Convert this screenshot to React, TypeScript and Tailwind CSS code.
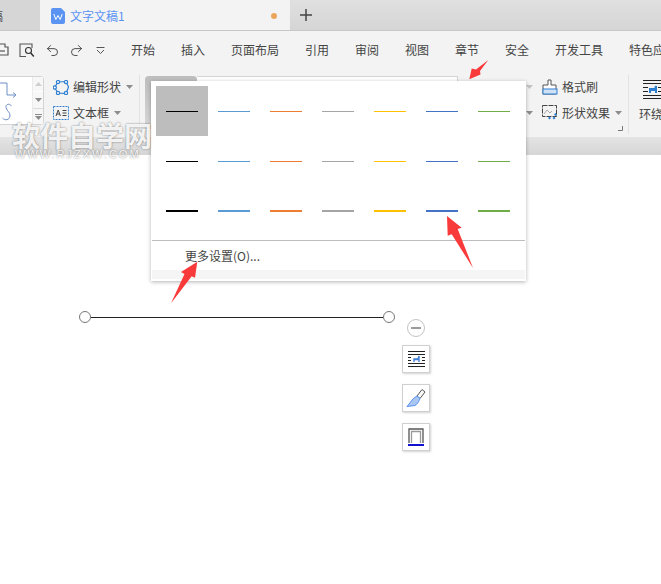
import { Redo2, Undo2 } from 'lucide-react';

const FONT = "font-['Noto_Sans_CJK_SC','Liberation_Sans',sans-serif]";

const tabs = [
  { label: '开始', width: 'w-[50px]' },
  { label: '插入', width: 'w-[50px]' },
  { label: '页面布局', width: 'w-[74px]' },
  { label: '引用', width: 'w-[50px]' },
  { label: '审阅', width: 'w-[50px]' },
  { label: '视图', width: 'w-[50px]' },
  { label: '章节', width: 'w-[50px]' },
  { label: '安全', width: 'w-[50px]' },
  { label: '开发工具', width: 'w-[74px]' },
  { label: '特色应用', width: 'w-[74px]' },
];

const lineColors = [
  'bg-[#000000]',
  'bg-[#5b9bd5]',
  'bg-[#ed7d31]',
  'bg-[#a5a5a5]',
  'bg-[#ffc000]',
  'bg-[#4472c4]',
  'bg-[#70ad47]',
];

const rows = ['h-px', 'h-px', 'h-[2px]'];

function Caret({ className = '', light }: { className?: string; light?: boolean }) {
  return (
    <svg width="7" height="4" viewBox="0 0 7 4" className={className}>
      <path d="M0 0h7L3.5 4z" fill={light ? '#c4c4c4' : '#8c8c8c'} />
    </svg>
  );
}

function QuickIcons() {
  return (
    <div className="flex items-center w-[131px] shrink-0 text-[#555]">
      <svg width="9" height="14" viewBox="0 0 9 14" className="mr-[10px]" fill="none" stroke="#555" strokeWidth="1.2">
        <path d="M-4 1h9v3h3v8H-1" />
        <path d="M-2 8h7" />
      </svg>
      <svg width="16" height="15" viewBox="0 0 16 15" className="mr-[10px]" fill="none" stroke="#555" strokeWidth="1.1">
        <path d="M13 5V1H1v12.5h6" />
        <circle cx="9.5" cy="7.5" r="3" stroke="#333" />
        <path d="M11.8 10l3 3.5" stroke="#333" strokeWidth="1.5" />
      </svg>
      <Undo2 size={15} strokeWidth={1.5} color="#444" className="mr-[9px]" />
      <Redo2 size={15} strokeWidth={1.5} color="#444" className="mr-[12px]" />
      <svg width="9" height="7" viewBox="0 0 9 7" fill="none" stroke="#555" strokeWidth="1">
        <path d="M.5 .5h8M1 3l3.5 3.5L8 3" />
      </svg>
    </div>
  );
}

function ShapeGallery() {
  return (
    <div className="flex h-[49px] w-[44px] shrink-0 rounded-r-[4px] border border-l-0 border-[#d4d4d4] bg-white">
      <svg width="32" height="47" viewBox="0 0 32 47" fill="none" stroke="#6d8fc7" strokeWidth="1" className="shrink-0">
        <path d="M-2 6h9v12h8M13 15.5l3 2.5-3 2.5" />
        <path d="M11.5 29c-2-3-6-2-5.500 1.500s4.500 4.500 4 8.500-5 5-7.500 2" />
      </svg>
      <div className="flex-1 flex flex-col border-l border-[#ececec] bg-[#f7f7f7]">
        <div className="h-[15px] flex items-center justify-center border-b border-white">
          <svg width="7" height="4" viewBox="0 0 7 4"><path d="M3.5 0L7 4H0z" fill="#cfcfcf" /></svg>
        </div>
        <div className="h-[17px] flex items-center justify-center border-b border-[#dcdcdc]">
          <Caret />
        </div>
        <div className="flex-1 flex flex-col items-center justify-center gap-px">
          <span className="w-[7px] h-px bg-[#8c8c8c]" />
          <Caret />
        </div>
      </div>
    </div>
  );
}

function IconLabel({ icon, label, caret }: { icon: React.ReactNode; label: string; caret?: boolean }) {
  return (
    <div className="flex items-center h-[26px] text-[12px] text-[#444] whitespace-nowrap">
      <span className="w-[20px] h-[17px] flex items-center shrink-0">{icon}</span>
      <span>{label}</span>
      {caret && <Caret className="ml-[5px]" />}
    </div>
  );
}

function Ribbon() {
  return (
    <div className="flex h-[62px] bg-[#f3f3f3] pt-[1px] overflow-hidden">
      <ShapeGallery />
      <div className="w-[95px] shrink-0 pl-[9px] -mt-[2px] flex flex-col">
        <IconLabel
          label="编辑形状"
          caret
          icon={
            <svg width="17" height="15" viewBox="0 0 17 15" fill="none" stroke="#2f7fd1" strokeWidth="1.2">
              <path d="M5 2L13 1.5L15.5 7L13 13.5L5 13L1.5 7.5z" />
              <circle cx="5" cy="2" r="1.6" fill="#fff" />
              <circle cx="13" cy="2" r="1.6" fill="#fff" />
              <circle cx="1.8" cy="7.5" r="1.6" fill="#fff" />
              <circle cx="5" cy="13" r="1.6" fill="#fff" />
              <circle cx="13" cy="13" r="1.6" fill="#fff" />
            </svg>
          }
        />
        <IconLabel
          label="文本框"
          caret
          icon={
            <svg width="16" height="14" viewBox="0 0 16 14" fill="none">
              <rect x=".5" y=".5" width="15" height="13" stroke="#2f7fd1" strokeDasharray="2 1" />
              <path d="M3 10l2.200-6 2.200 6M3.800 8h3" stroke="#444" />
              <path d="M9.500 4.500h4M9.500 7h4M9.500 9.500h4" stroke="#444" />
            </svg>
          }
        />
      </div>
      <div className="w-px h-[60px] -mt-[2px] bg-[#e2e2e2] shrink-0" />
      <div className="ml-[5px] w-[313px] shrink-0 h-[53px] flex">
        <div className="w-[52px] bg-gradient-to-b from-[#bdbdbd] to-[#d8d8d8] rounded-t-[4px]" />
        <div className="flex-1 h-[5px] bg-white border-t border-r border-[#d4d4d4]" />
      </div>
      <div className="w-[84px] shrink-0 flex flex-col items-end pr-[9px] -mt-[2px]">
        <div className="h-[26px] flex items-center"><Caret light /></div>
        <div className="h-[26px] flex items-center"><Caret /></div>
      </div>
      <div className="w-[86px] shrink-0 relative flex flex-col -mt-[2px]">
        <IconLabel
          label="格式刷"
          icon={
            <svg width="16" height="16" viewBox="0 0 16 16" fill="none">
              <path d="M6 1h3v5h5v9H1V6h5z" fill="#fff" stroke="#555" />
              <rect x="1" y="10" width="14" height="5" fill="#cfe2f5" stroke="#2f7fd1" />
            </svg>
          }
        />
        <IconLabel
          label="形状效果"
          caret
          icon={
            <svg width="17" height="16" viewBox="0 0 17 16" fill="none">
              <rect x=".5" y=".5" width="14" height="11" stroke="#444" strokeDasharray="5 1" />
              <path d="M2 9l3-4 3 3 2-2" stroke="#aaa" />
              <path d="M6 13l1.500-1.500L9 13l-1.500 1.500zM12 9.500l1.500-1.500L15 9.500 13.500 11zM10.500 13l1.500-1.500 1.500 1.500-1.500 1.500z" fill="#2f7fd1" />
            </svg>
          }
        />
        <svg width="5" height="5" viewBox="0 0 5 5" className="absolute left-[76px] top-[52px]" fill="none" stroke="#777">
          <path d="M0 4.500h4.500V0" />
        </svg>
      </div>
      <div className="w-px h-[60px] -mt-[2px] bg-[#e2e2e2] shrink-0" />
      <div className="pl-[10px] flex flex-col shrink-0">
        <svg width="28" height="19" viewBox="0 0 28 19" className="ml-[4px] mt-[4px]" fill="none" stroke="#222">
          <path d="M0 .5h20M0 3.500h20M0 15.500h20M0 18.500h20M0 7.500h5M15 7.500h5M0 11.500h5M15 11.500h5" />
          <path d="M7 13V9h5l1-3v7M7 10h6" stroke="#2f7fd1" strokeWidth="2" />
        </svg>
        <span className="mt-[6px] text-[12px] text-[#444] whitespace-nowrap">环绕</span>
      </div>
    </div>
  );
}

function LineMenu() {
  return (
    <div className="absolute left-[151px] top-[81px] w-[375px] h-[200px] bg-white shadow-[0_1px_4px_rgba(0,0,0,0.3)] flex flex-col px-[1px]">
      <div className="pl-[4px] pt-[5px] h-[159px]">
        {rows.map((weight, r) => (
          <div key={r} className="flex h-[50px]">
            {lineColors.map((color, c) => (
              <div
                key={c}
                className={`w-[52px] flex items-center justify-center ${r === 0 && c === 0 ? 'bg-[#bdbdbd]' : ''}`}
              >
                <span className={`w-[32px] ${weight} ${color}`} />
              </div>
            ))}
          </div>
        ))}
      </div>
      <div className="h-px bg-[#bdbdbd]" />
      <div className="h-[29px] flex items-center pl-[33px] text-[12px] text-[#444]">更多设置(O)...</div>
      <div className="h-[9px] bg-[#f5f5f5]" />
    </div>
  );
}

function FloatButton({ children }: { children: React.ReactNode }) {
  return (
    <div className="w-[28px] h-[28px] bg-white border border-[#d0d0d0] shadow-[1px_1px_2px_rgba(0,0,0,0.18)] flex items-center justify-center">
      {children}
    </div>
  );
}

export default function App() {
  return (
    <div className={`relative w-[661px] h-[584px] overflow-hidden bg-white ${FONT}`}>
      {/* title bar */}
      <div className="flex h-[31px] bg-gradient-to-b from-[#e0e0e0] to-[#d5d5d5] border-b border-[#c8c8c8]">
        <div className="w-[40px] bg-[#d6d6d6] text-[12px] text-[#555] leading-[31px] overflow-hidden">
          <span className="block ml-[-9px]">稿</span>
        </div>
        <div className="w-[250px] bg-[#f3f3f3] flex items-center pl-[11px] pr-[13px] pt-[1px]">
          <svg width="14" height="16" viewBox="0 0 14 16" className="mr-[5px]">
            <path d="M2 0h8l4 4v10a2 2 0 01-2 2H2a2 2 0 01-2-2V2a2 2 0 012-2z" fill="#5a93f2" />
            <path d="M2.800 6l2 5.500 2.200-4 2.200 4 2-5.500" fill="none" stroke="#fff" strokeWidth="1" />
          </svg>
          <span className="text-[12px] text-[#5a93f2]">文字文稿1</span>
          <span className="ml-auto w-[6px] h-[6px] rounded-full bg-[#eba65e]" />
        </div>
        <div className="pl-[10px] flex items-center">
          <svg width="12" height="12" viewBox="0 0 12 12" stroke="#444" strokeWidth="1.5">
            <path d="M6 0v12M0 6h12" />
          </svg>
        </div>
      </div>

      {/* menu tabs */}
      <div className="flex items-center h-[44px] pb-[6px] bg-[#f3f3f3] overflow-hidden">
        <QuickIcons />
        {tabs.map((tab) => (
          <span key={tab.label} className={`${tab.width} shrink-0 text-[12px] text-[#444] whitespace-nowrap`}>
            {tab.label}
          </span>
        ))}
      </div>

      <Ribbon />
      <div className="h-[18px] bg-gradient-to-b from-[#e4e4e4] to-[#d6d6d6]" />

      {/* shape on the page */}
      <div className="absolute left-[79px] top-[311px] w-[316px] h-[12px] flex items-center">
        <span className="w-[12px] h-[12px] rounded-full bg-white border border-[#777] shrink-0" />
        <span className="flex-1 h-px bg-[#222]" />
        <span className="w-[12px] h-[12px] rounded-full bg-white border border-[#777] shrink-0" />
      </div>

      {/* floating shape tools */}
      <div className="absolute left-[402px] top-[319px] w-[28px] flex flex-col items-center gap-[11px]">
        <span className="w-[18px] h-[18px] mb-[-3px] rounded-full border border-[#c4c4c4] bg-white flex items-center justify-center">
          <span className="w-[10px] h-[2px] bg-[#9a9a9a]" />
        </span>
        <FloatButton>
          <svg width="17" height="16" viewBox="0 0 17 16" fill="none" stroke="#222">
            <path d="M0 .5h17M0 3.500h17M0 12.500h17M0 15.500h17M0 6.500h3M14 6.500h3M0 9.500h3M14 9.500h3" />
            <path d="M6 11V8h4l1-3v6M6 8.500h5" stroke="#3f80d8" strokeWidth="1.4" />
          </svg>
        </FloatButton>
        <FloatButton>
          <svg width="20" height="20" viewBox="0 0 20 20" fill="none">
            <path d="M11 8l5-6.500 3 2.500-5 6.500z" fill="#fff" stroke="#555" />
            <path d="M11 8l3 2.500c-1 3-3 6-5 7l-8 1c3-3 5-8 10-10.500z" fill="#a9c7f0" stroke="#5a93f2" />
          </svg>
        </FloatButton>
        <FloatButton>
          <svg width="18" height="20" viewBox="0 0 18 20" fill="none">
            <path d="M2 16V2h14v14" stroke="#555" strokeWidth="1.300" />
            <path d="M4.500 16V4.500h9V16" stroke="#999" strokeWidth="1.300" />
            <path d="M1 18h16" stroke="#1010d0" strokeWidth="2" />
          </svg>
        </FloatButton>
      </div>

      <LineMenu />

      {/* watermark */}
      <div className="absolute left-[12px] top-[121px] w-[140px] text-white/90 pointer-events-none [text-shadow:0_0_2px_rgba(0,0,0,0.55)]">
        <div className="text-[28px] leading-[28px] font-bold whitespace-nowrap">软件自学网</div>
        <div className="text-[11px] leading-[10px] whitespace-nowrap tracking-[2px] pl-[3px] font-['Liberation_Sans',sans-serif]">WWW.RJZXW.COM</div>
      </div>

      {/* annotation arrows */}
      <svg width="22" height="22" viewBox="0 0 22 22" className="absolute left-[468px] top-[59px]">
        <path d="M20.300 1L12 12 12.500 15.500 1.300 20.300 3.700 9.500 8 10.500z" fill="#f93a3a" />
      </svg>
      <svg width="30" height="55" viewBox="0 0 30 55" className="absolute left-[445px] top-[215px]">
        <path d="M2 1L16.700 12.700 12.700 14 28 53 6.700 19.300 2.700 20.700z" fill="#f93a3a" />
      </svg>
      <svg width="30" height="45" viewBox="0 0 30 45" className="absolute left-[170px] top-[260px]">
        <path d="M27.300 1.700L25 17.700 21.700 16.300 1 43.300 14.500 14 11 12z" fill="#f93a3a" />
      </svg>
    </div>
  );
}
